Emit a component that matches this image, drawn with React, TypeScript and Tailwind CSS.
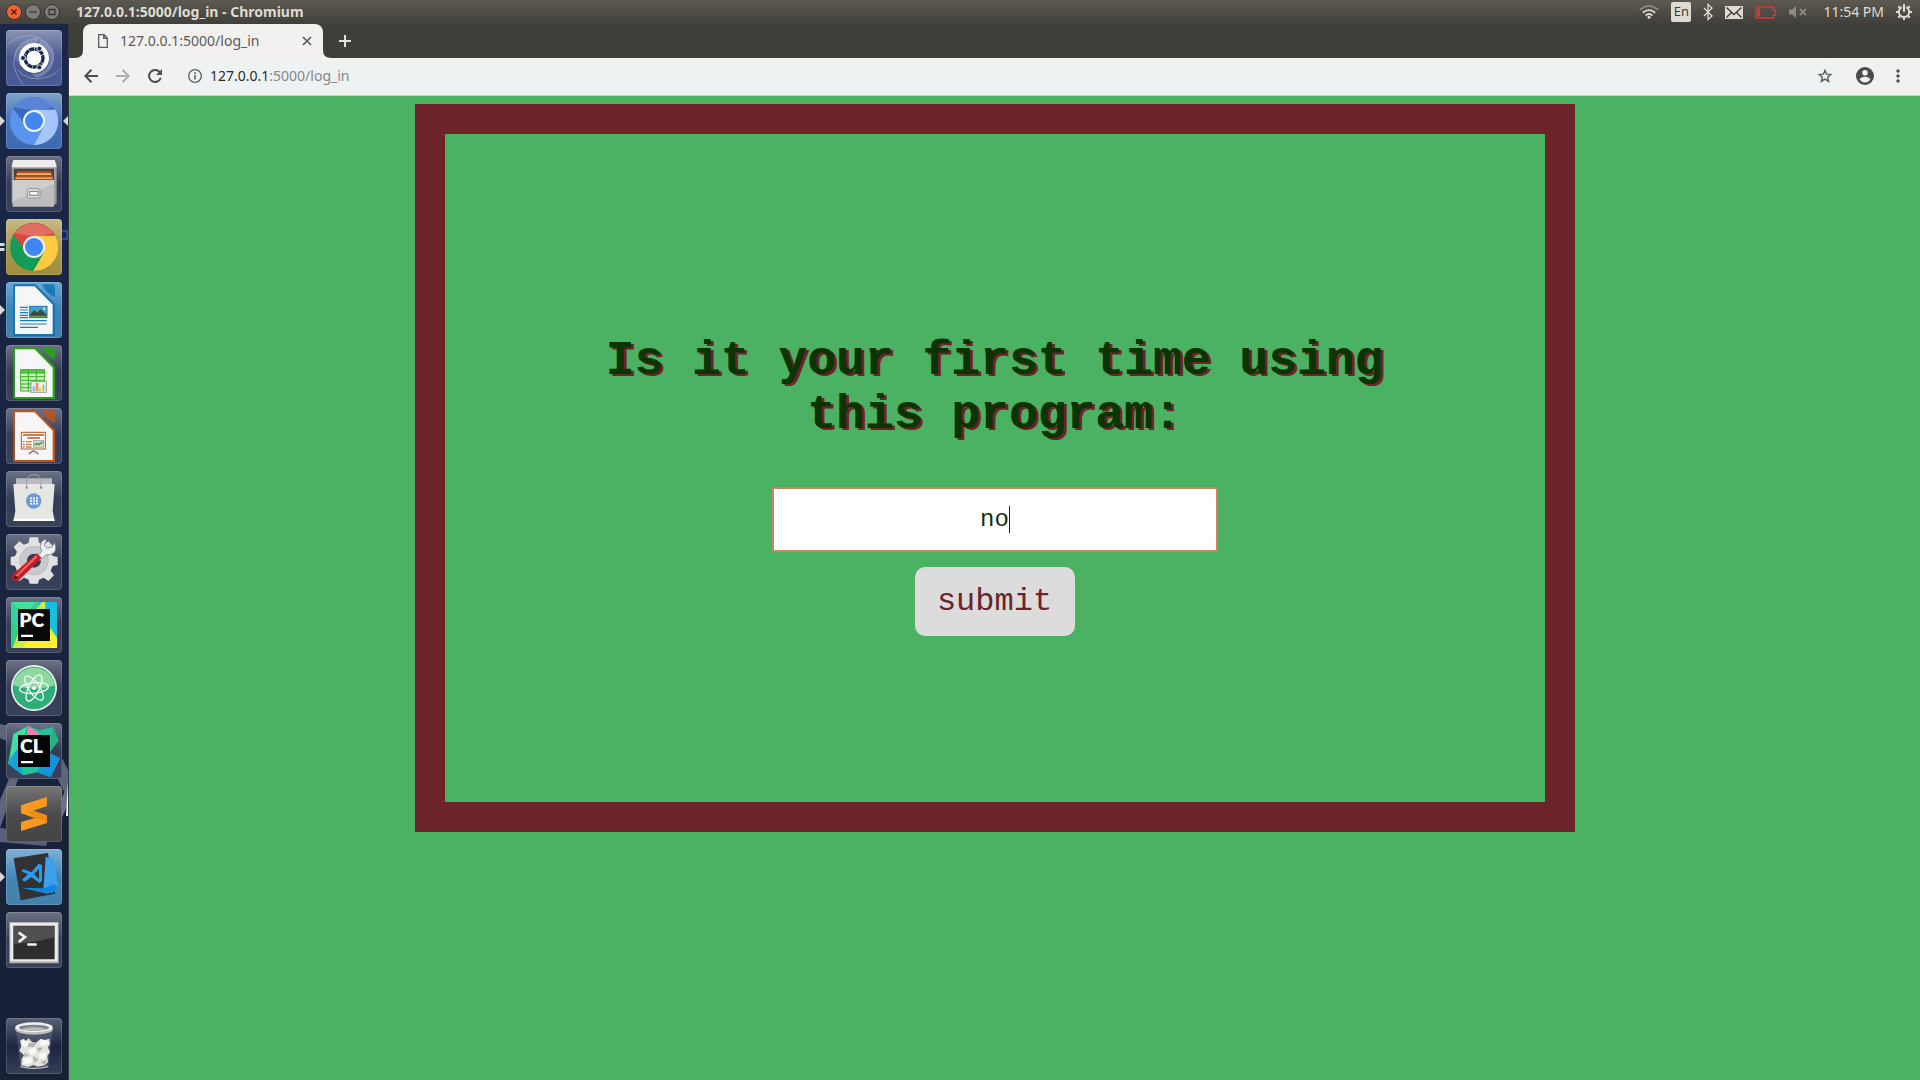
import React from "react";

type Marks = "none" | "one" | "multi" | "active";

interface LauncherItem {
  name: string;
  tile: string;
  marks: Marks;
  art: React.ReactNode;
}

const plain = "bg-linear-to-b from-[#6d7285] via-[#343c56] to-[#3a425b]";

function DocumentShape({ color, children }: { color: string; children: React.ReactNode }) {
  return (
    <>
      <path d="M22 7H88L147 66V162H22Z" fill={color} />
      <path d="M27 13H86L140 68V156H27Z" fill="#f6f6f6" />
      <path d="M108 7H140Q147 7 147 14V46Q136 42 124 30Q112 18 108 7Z" fill={color} opacity="0.85" />
      {children}
    </>
  );
}

function Segments() {
  return (
    <>
      <circle cx="84" cy="84" r="27" fill="none" stroke="#1c2a52" strokeWidth="10" strokeDasharray="14.5 1.5" />
      <circle cx="84" cy="84" r="21" fill="#fff" />
      {[
        [51, 84],
        [100, 56],
        [100, 112],
      ].map(([x, y]) => (
        <circle key={`${x}-${y}`} cx={x} cy={y} r="7.5" fill="#1c2a52" stroke="#fff" strokeWidth="2.5" />
      ))}
    </>
  );
}

const items: LauncherItem[] = [
  {
    name: "Search your computer",
    tile: "bg-linear-to-b from-[#8a94b4] via-[#4b5b91] to-[#485b95]",
    marks: "none",
    art: (
      <>
        <g fill="none" stroke="#aeb9da" strokeOpacity="0.55" strokeWidth="3">
          <path d="M6 42Q50 2 104 26Q148 50 142 90Q134 130 90 142" />
          <path d="M98 24Q34 28 24 84Q20 128 52 164" />
          <path d="M34 120Q70 158 120 142Q146 136 162 116" />
        </g>
        <path d="M104 26Q148 50 142 90Q134 130 90 142Q60 130 84 84Z" fill="#c5cde6" opacity="0.3" />
        <path d="M24 84Q28 34 98 24L84 60L44 110Z" fill="#c5cde6" opacity="0.22" />
        <circle cx="85" cy="86" r="46" fill="#1c2a52" opacity="0.35" />
        <circle cx="84" cy="84" r="45" fill="#fff" />
        <Segments />
      </>
    ),
  },
  {
    name: "Chromium Web Browser",
    tile: "bg-linear-to-b from-[#7fa2cc] via-[#4573b8] to-[#3c69b0]",
    marks: "active",
    art: (
      <>
        <circle cx="84" cy="84" r="72" fill="#5a93f0" />
        <path d="M22 47A72 72 0 0 1 146 50H84L58 95Z" fill="#3b67c4" />
        <path d="M26 42A72 72 0 0 1 142 42Q84 60 26 42Z" fill="#6f97e2" opacity="0.6" />
        <path d="M84 50H148A72 72 0 0 1 84 156L114 100Z" fill="#a6c5fa" />
        <circle cx="84" cy="84" r="33" fill="#f2f6ff" />
        <circle cx="84" cy="84" r="27" fill="#4287f5" />
      </>
    ),
  },
  {
    name: "Files",
    tile: plain,
    marks: "none",
    art: (
      <>
        <path d="M22 12H146L152 26V142L144 148H24L17 142V26Z" fill="#9b9b9b" />
        <path d="M22 12H146L152 34H17Z" fill="#ededed" />
        <path d="M24 38H144V74H24Z" fill="#4d4039" />
        <path d="M34 46H134V50H34ZM30 58H140V62H30Z" fill="#c84f1e" />
        <path d="M32 51H136V57H32ZM28 64H140V70H28Z" fill="#efaa55" />
        <path d="M20 72H144V152H20Z" fill="#bdbdbd" />
        <path d="M20 72H144V84L20 136Z" fill="#cecece" />
        <rect x="64" y="98" width="38" height="28" rx="6" fill="#e5e5e5" stroke="#8d8d8d" strokeWidth="3" />
        <rect x="71" y="106" width="25" height="12" fill="#fafafa" stroke="#777" strokeWidth="3" />
      </>
    ),
  },
  {
    name: "Google Chrome",
    tile: "bg-linear-to-b from-[#c7bc88] via-[#a99850] to-[#a08d3c]",
    marks: "multi",
    art: (
      <>
        <circle cx="84" cy="84" r="72" fill="#149b57" />
        <path d="M22 47A72 72 0 0 1 148 50H84L50 84Z" fill="#d9463b" />
        <path d="M26 42A72 72 0 0 1 142 42Q84 60 26 42Z" fill="#e5897f" opacity="0.6" />
        <path d="M84 50H148A72 72 0 0 1 82 156L114 100Z" fill="#fdcb42" />
        <circle cx="84" cy="84" r="33" fill="#f1f1f1" />
        <circle cx="84" cy="84" r="27" fill="#4285f4" />
      </>
    ),
  },
  {
    name: "LibreOffice Writer",
    tile: "bg-linear-to-b from-[#6aa9d8] via-[#3a82b9] to-[#4482ad]",
    marks: "one",
    art: (
      <DocumentShape color="#1273b4">
        <path d="M42 76H66M42 84H66M42 92H66M42 100H66M42 107H66M42 116H122M42 126H122M42 136H96" stroke="#1b7cbd" strokeWidth="3.5" />
        <rect x="71" y="73" width="52" height="34" fill="#3fa0de" stroke="#2379b3" strokeWidth="3" />
        <path d="M72 98L84 84L94 92L104 82L122 98V106H72Z" fill="#3c4a3b" />
        <path d="M72 101H122V106H72Z" fill="#62a345" />
        <circle cx="115" cy="80" r="4" fill="#f7d34a" />
      </DocumentShape>
    ),
  },
  {
    name: "LibreOffice Calc",
    tile: plain,
    marks: "none",
    art: (
      <DocumentShape color="#27a416">
        <path d="M44 74H116V138H44Z" fill="#c9f2bf" />
        <path d="M44 74H116V84H44Z" fill="#5cc84a" />
        <path d="M44 74H116V138H44ZM44 84H116M44 95H116M44 106H116M44 117H116M44 128H116M67 74V138M91 74V138" fill="none" stroke="#35ac23" strokeWidth="3" />
        <rect x="75" y="110" width="46" height="32" fill="#f2f2f2" stroke="#999" strokeWidth="3" />
        <path d="M80 124H86V139H80Z" fill="#76b6ee" />
        <path d="M89 114H97V139H89Z" fill="#f08e58" />
        <path d="M99 128H105V139H99Z" fill="#e3c75c" />
        <path d="M109 119H115V139H109Z" fill="#83cf72" />
      </DocumentShape>
    ),
  },
  {
    name: "LibreOffice Impress",
    tile: plain,
    marks: "none",
    art: (
      <DocumentShape color="#bd531d">
        <rect x="46" y="73" width="72" height="50" fill="#fff" stroke="#b9561f" strokeWidth="3" />
        <path d="M51 81H114M64 90H102" stroke="#b9561f" strokeWidth="5" />
        <path d="M50 101H56M50 109H56M50 117H56M60 101H77M60 109H77M60 117H77" stroke="#cf7440" strokeWidth="4" />
        <rect x="82" y="97" width="31" height="21" fill="#d2d2d2" stroke="#9a9a9a" strokeWidth="2" />
        <path d="M86 112L93 106L98 110L110 102" fill="none" stroke="#2ea21e" strokeWidth="4" />
        <path d="M82 126V132M82 128L68 138M82 128L98 138" stroke="#777" strokeWidth="4" />
      </DocumentShape>
    ),
  },
  {
    name: "Ubuntu Software",
    tile: plain,
    marks: "none",
    art: (
      <>
        <path d="M30 22H138V42H30Z" fill="#b9bcbf" />
        <path d="M22 39H146L140 120L146 150H22L28 120Z" fill="#e6e7e3" />
        <path d="M24 143H144L146 150H22Z" fill="#fff" />
        <path d="M62 48V30Q64 11 84 11Q104 11 105 30V48" fill="none" stroke="#a2a5a6" strokeWidth="3" />
        <circle cx="62" cy="50" r="3" fill="#777" />
        <circle cx="105" cy="50" r="3" fill="#777" />
        <circle cx="83" cy="90" r="23" fill="#6f9bd0" />
        <path d="M72 82H96M72 90H96M72 98H96" stroke="#fff" strokeWidth="5" strokeDasharray="6 3" />
      </>
    ),
  },
  {
    name: "System Settings",
    tile: plain,
    marks: "none",
    art: (
      <>
        <path
          d="M71 10H96L99 26L113 32L127 22L144 39L134 53L140 66L155 69V93L140 96L134 110L144 124L127 141L113 131L99 137L96 149H71L68 137L54 131L40 141L23 124L33 110L27 96L14 93V69L27 66L33 53L23 39L40 22L54 32L68 26Z"
          fill="#dfe1e2"
        />
        <circle cx="84" cy="80" r="43" fill="#c7cacc" stroke="#aeb2b5" strokeWidth="2" />
        <circle cx="84" cy="80" r="21" fill="#2f3854" />
        <path d="M92 68L108 52Q98 38 106 24L118 15L121 20L115 33L124 43L138 39L145 26Q154 44 144 56Q132 66 120 62L102 80Z" fill="#f0f1f2" stroke="#7c8286" strokeWidth="2.500" />
        <path d="M92 58L107 71L42 136Q32 144 22 138Q14 130 22 120Z" fill="#c61d24" />
        <path d="M90 64L95 68L32 130L26 128Z" fill="#ee6a62" />
        <circle cx="29" cy="130" r="5" fill="#5a0d10" />
      </>
    ),
  },
  {
    name: "PyCharm",
    tile: plain,
    marks: "none",
    art: (
      <>
        <path d="M15 15H153V153H15Z" fill="#33d29a" />
        <path d="M15 15H90L60 50Z" fill="#44e2a0" />
        <path d="M96 15H153V130L120 70Z" fill="#16bfe0" />
        <path d="M34 110L108 15H118V70L153 122V153H22L15 150Z" fill="#c9ee45" />
        <path d="M60 135L132 100L153 122V153H50Z" fill="#fdf02f" />
        <path d="M15 60L36 110L20 153H15Z" fill="#2fcf80" />
        <path d="M36 36H132V132H36Z" fill="#090909" />
        <path d="M45 113H81V120H45Z" fill="#fff" />
        <text x="40" y="91" fill="#fff" fontSize="58" fontWeight="800" className="font-['Lato',sans-serif]">
          PC
        </text>
      </>
    ),
  },
  {
    name: "Atom",
    tile: plain,
    marks: "none",
    art: (
      <>
        <circle cx="84" cy="84" r="69" fill="#eef3f0" />
        <circle cx="84" cy="84" r="64" fill="#2fae79" />
        <path d="M21 76A64 64 0 0 1 147 76Q84 96 21 76Z" fill="#8fd6a0" />
        <g fill="none" stroke="#f2fff8" strokeWidth="4">
          <ellipse cx="84" cy="84" rx="43" ry="16" transform="rotate(-6 84 84)" />
          <ellipse cx="84" cy="84" rx="43" ry="16" transform="rotate(55 84 84)" />
          <ellipse cx="84" cy="84" rx="43" ry="16" transform="rotate(116 84 84)" />
        </g>
        <circle cx="84" cy="84" r="6" fill="#fff" />
      </>
    ),
  },
  {
    name: "CLion",
    tile: plain,
    marks: "none",
    art: (
      <>
        <path d="M22 34L66 8L100 22L140 12L158 52L130 90L162 106L134 162L92 148L54 157L6 122Z" fill="#21c49a" />
        <path d="M66 8L100 32L90 50H62Z" fill="#f27db0" />
        <path d="M6 122L36 70L50 157Z" fill="#17a1dc" />
        <path d="M22 34L62 12L50 60L12 104Z" fill="#45dca2" />
        <path d="M130 90L162 106L134 162L92 148Z" fill="#1593d9" />
        <path d="M140 12L158 52L132 80Z" fill="#2bb07d" />
        <path d="M36 36H132V132H36Z" fill="#050505" />
        <path d="M45 114H81V121H45Z" fill="#fff" />
        <text x="42" y="89" fill="#fff" fontSize="58" fontWeight="800" className="font-['Lato',sans-serif]">
          CL
        </text>
      </>
    ),
  },
  {
    name: "Sublime Text",
    tile: "bg-linear-to-b from-[#777] via-[#4b4b4b] to-[#434343]",
    marks: "none",
    art: (
      <>
        <path d="M45 58L123 33V60L82 74L123 88V111L45 135V108L86 96L45 82Z" fill="#fb9820" />
        <path d="M64 76L82 74L123 88V108L86 96Z" fill="#e27d12" opacity="0.5" />
      </>
    ),
  },
  {
    name: "Visual Studio Code",
    tile: "bg-linear-to-b from-[#80b1d5] via-[#4287b9] to-[#457fa9]",
    marks: "one",
    art: (
      <>
        <path d="M23 28L126 12L147 134L44 154Z" fill="#303235" />
        <path d="M119 24L142 26L157 116L139 131H122L112 124Z" fill="#3ba0ea" />
        <path d="M46 116L114 118L144 106L157 116L139 131L122 134Z" fill="#1684d8" />
        <path d="M98 44L108 48V96L100 102L76 84L56 98L48 92L66 76L46 66L52 60L76 70ZM99 60L84 76L99 90Z" fill="#2d9bea" fillRule="evenodd" />
      </>
    ),
  },
  {
    name: "Terminal",
    tile: plain,
    marks: "none",
    art: (
      <>
        <path d="M10 30H158V154H10Z" fill="#b4b4b4" />
        <path d="M13 33H155V148H13Z" fill="#ececec" />
        <path d="M22 41H146V142H22Z" fill="#2d2d2d" />
        <path d="M24 43H144V76Q84 92 24 96Z" fill="#505050" />
        <path d="M38 62L57 75L38 90" fill="none" stroke="#f4f4f4" strokeWidth="8" />
        <path d="M64 94H92V101H64Z" fill="#f4f4f4" />
      </>
    ),
  },
];

const trash: LauncherItem = {
  name: "Trash",
  tile: "bg-linear-to-b from-[#5b6176] via-[#1c2440] to-[#363e58]",
  marks: "none",
  art: (
    <>
      <path d="M30 36H140L127 146Q84 156 43 146Z" fill="#8d98a8" opacity="0.3" />
      <path d="M43 144Q84 156 127 144V148Q84 158 43 148Z" fill="#c6c9c6" />
      <path
        d="M42 68L52 62L60 68L68 61L78 72L90 74L104 62L116 66L130 62L132 78L126 88L132 102L124 114L126 132L116 142L96 146L82 141L66 147L46 142L47 122L54 112L40 98L46 84Z"
        fill="#e4e3df"
      />
      <g fill="#f8f8f6">
        <path d="M50 66L70 74L62 88L46 82Z" />
        <path d="M104 66L126 68L120 84L102 80Z" />
        <path d="M66 94L88 88L92 106L74 112Z" />
        <path d="M98 108L122 102L118 122L100 124Z" />
        <path d="M52 122L76 118L78 136L54 138Z" />
      </g>
      <g fill="#b4b4ae">
        <path d="M70 74L90 76L84 86L64 88Z" />
        <path d="M92 90L112 88L100 102Z" />
        <path d="M54 104L70 112L56 118Z" />
        <path d="M80 114L98 124L86 134Z" />
        <path d="M104 132L122 126L116 140Z" />
      </g>
      <ellipse cx="84" cy="33" rx="57" ry="17" fill="#bdbdb9" />
      <ellipse cx="84" cy="28" rx="56" ry="15" fill="#f0f0ee" />
      <ellipse cx="84" cy="29" rx="45" ry="9" fill="#7f8588" />
      <path d="M46 33Q84 22 122 33Q84 43 46 33Z" fill="#b9bdbf" />
    </>
  ),
};

function LauncherButton({ item }: { item: LauncherItem }) {
  return (
    <li className="relative flex">
      {(item.marks === "one" || item.marks === "active") && (
        <svg viewBox="0 0 5 10" className="absolute top-[23px] -left-1.5 h-2.5 w-[5px] fill-[#d8d8d8]" aria-hidden="true">
          <path d="M0 0L5 5L0 10Z" />
        </svg>
      )}
      {item.marks === "multi" && (
        <svg viewBox="0 0 5 10" className="absolute top-[23px] -left-1.5 h-2.5 w-[5px] fill-[#d8d8d8]" aria-hidden="true">
          <path d="M0 1H4L5 2.5L4 4H0ZM0 6H4L5 7.5L4 9H0Z" />
        </svg>
      )}
      <button
        type="button"
        aria-label={item.name}
        className={`size-14 overflow-hidden rounded-sm shadow-[inset_0_0_0_1px_rgba(255,255,255,0.15)] ${item.tile}`}
      >
        <svg viewBox="0 0 168 168" className="size-14" aria-hidden="true">
          {item.art}
        </svg>
      </button>
      {item.marks === "active" && (
        <svg viewBox="0 0 5 10" className="absolute top-[23px] -right-1.5 h-2.5 w-[5px] fill-[#d8d8d8]" aria-hidden="true">
          <path d="M5 0L0 5L5 10Z" />
        </svg>
      )}
    </li>
  );
}

function Launcher() {
  return (
    <nav aria-label="Launcher" className="relative flex w-[69px] shrink-0 flex-col border-r border-[#35364a] bg-linear-to-b from-[#1a2748] to-[#172035] px-1.5 pt-1.5 pb-1.5">
      <svg viewBox="0 0 68 150" className="absolute top-[676px] left-0 h-[150px] w-[68px]" aria-hidden="true">
        <g fill="#6b718a">
          <path d="M0 0V24L27 30L45 24L68 70V100L36 34L10 100L0 128V100L22 48L0 38Z" opacity="0.85" />
          <path d="M0 128L50 134L46 146L0 142Z" opacity="0.8" />
          <path d="M68 84V104L52 140L46 134Z" />
        </g>
        <path d="M68 82V116H66Z" fill="#fff" />
      </svg>
      <svg viewBox="0 0 6 24" className="absolute top-[206px] right-0 h-6 w-1.5" aria-hidden="true">
        <path d="M0 1H5V9H0" fill="none" stroke="#304a94" strokeWidth="2" />
      </svg>
      <ul className="relative flex grow flex-col gap-[7px]">
        {items.map((item) => (
          <LauncherButton key={item.name} item={item} />
        ))}
        <li className="grow" aria-hidden="true" />
        <LauncherButton item={trash} />
      </ul>
    </nav>
  );
}

function MenuBar() {
  return (
    <header className="flex h-6 shrink-0 items-center bg-linear-to-b from-[#5c5a50] to-[#403f3a] pr-2 pl-1.5 font-['Noto_Sans',sans-serif] text-[#dfdbd2]">
      <div className="flex items-center gap-[3px]">
        <button type="button" aria-label="Close window" className="size-4">
          <svg viewBox="0 0 16 16" className="size-4">
            <circle cx="8" cy="8" r="7.5" fill="#ee6234" stroke="#3a3834" />
            <path d="M5.5 5.5L10.5 10.5M10.5 5.5L5.5 10.5" stroke="#532214" strokeWidth="1.5" />
          </svg>
        </button>
        <button type="button" aria-label="Minimize window" className="size-4">
          <svg viewBox="0 0 16 16" className="size-4">
            <circle cx="8" cy="8" r="7.5" fill="#7e7c74" stroke="#36342f" />
            <path d="M4.5 8H11.5" stroke="#3a3834" strokeWidth="1.3" />
          </svg>
        </button>
        <button type="button" aria-label="Restore window" className="size-4">
          <svg viewBox="0 0 16 16" className="size-4">
            <circle cx="8" cy="8" r="7.5" fill="#7e7c74" stroke="#36342f" />
            <path d="M5 5.5H11V10.5H5Z" fill="none" stroke="#3a3834" strokeWidth="1.3" />
          </svg>
        </button>
      </div>
      <h1 className="ml-4 text-sm leading-6 font-bold">127.0.0.1:5000/log_in - Chromium</h1>
      <div className="ml-auto flex items-center">
        <svg viewBox="0 0 20 14" className="h-3.5 w-5" fill="none" strokeWidth="1.8" aria-label="Wi-Fi">
          <path d="M.8 4.8Q10-3 19.2 4.8" stroke="#8b8981" />
          <path d="M3.8 7.8Q10 2.5 16.2 7.8M6.6 10.5Q10 7.5 13.4 10.5" stroke="#dfdbd2" />
          <circle cx="10" cy="12.2" r="1.5" fill="#dfdbd2" />
        </svg>
        <span className="ml-3 flex h-5 w-5 items-center justify-center rounded-xs bg-[#dfdbd2] text-[13px] text-[#3c3b37]">En</span>
        <svg viewBox="0 0 10 18" className="ml-3 h-[18px] w-2.5" fill="none" stroke="#dfdbd2" strokeWidth="1.3" aria-label="Bluetooth">
          <path d="M1 5L9 13L5 16.5V1.5L9 5L1 13" />
        </svg>
        <svg viewBox="0 0 18 13" className="ml-3 h-[13px] w-[18px]" aria-label="Messages">
          <path d="M0 0H18V13H0Z" fill="#dfdbd2" />
          <path d="M1.5 1.5L9 8.5L16.5 1.5M1.5 11.5L6.5 6.5M16.5 11.5L11.5 6.5" fill="none" stroke="#3c3b37" strokeWidth="1.3" />
        </svg>
        <svg viewBox="0 0 22 13" className="ml-3 h-[13px] w-[22px]" aria-label="Battery low">
          <path d="M1.5 1H18.5V4H20.5V9H18.5V12H1.5Q.7 12 .7 11V2Q.7 1 1.5 1Z" fill="none" stroke="#e0342b" strokeWidth="1.3" />
          <path d="M2 2.5H5V10.5H2Z" fill="#e0342b" />
        </svg>
        <svg viewBox="0 0 18 12" className="ml-3 h-3 w-[18px]" aria-label="Muted">
          <path d="M0 3.5H3L7 0V12L3 8.5H0Z" fill="#8b8981" />
          <path d="M11 3L17 9M17 3L11 9" stroke="#8b8981" strokeWidth="1.8" />
        </svg>
        <time className="ml-4 text-sm leading-6 whitespace-nowrap">11:54 PM</time>
        <svg viewBox="0 0 16 16" className="ml-3 size-4" fill="none" stroke="#dfdbd2" aria-label="System">
          <path d="M5.8 3.2A5.2 5.2 0 1 0 10.2 3.2" strokeWidth="2" />
          <path d="M8 0V8" strokeWidth="2" />
          <path d="M2.3 2.3L4 4M13.7 2.3L12 4M0 8H2.5M16 8H13.5M2.3 13.7L4 12M13.7 13.7L12 12M8 16V13.5" strokeWidth="2.2" />
        </svg>
      </div>
    </header>
  );
}

function TabStrip() {
  return (
    <div className="flex h-[34px] shrink-0 items-end bg-[#3f3f39] pl-1.5 font-['Noto_Sans',sans-serif]">
      <svg viewBox="0 0 8 8" className="size-2 fill-[#f2f1f0]" aria-hidden="true">
        <path d="M8 0V8H0Q8 8 8 0Z" />
      </svg>
      <div className="flex h-[34px] w-60 items-center rounded-t-lg bg-[#f2f1f0] pr-[11px] pl-[15px]">
        <svg viewBox="0 0 10 14" className="h-3.5 w-2.5" fill="none" stroke="#5a5a57" strokeWidth="1.3" aria-hidden="true">
          <path d="M.7.7H6L9.3 4V13.3H.7ZM5.7.7V4.3H9.3" />
        </svg>
        <span className="ml-3 text-sm leading-5 text-[#5a5a57]">127.0.0.1:5000/log_in</span>
        <button type="button" aria-label="Close tab" className="ml-auto">
          <svg viewBox="0 0 10 10" className="size-2.5" stroke="#5a5a57" strokeWidth="1.7">
            <path d="M1 1L9 9M9 1L1 9" />
          </svg>
        </button>
      </div>
      <svg viewBox="0 0 8 8" className="size-2 fill-[#f2f1f0]" aria-hidden="true">
        <path d="M0 0V8H8Q0 8 0 0Z" />
      </svg>
      <button type="button" aria-label="New tab" className="ml-2 flex h-[34px] items-center">
        <svg viewBox="0 0 12 12" className="size-3" stroke="#e4e2de" strokeWidth="2">
          <path d="M6 0V12M0 6H12" />
        </svg>
      </button>
    </div>
  );
}

function Toolbar() {
  return (
    <div className="flex h-[38px] shrink-0 items-center border-b border-[#cfcecb] bg-[#f2f1f0] pr-5 pb-px pl-[15px] font-['Noto_Sans',sans-serif]">
      <div className="flex items-center gap-[18px]">
        <button type="button" aria-label="Back">
          <svg viewBox="0 0 14 14" className="size-3.5" fill="none" stroke="#4f4f4d" strokeWidth="2">
            <path d="M14 7H1.5M7.5.8L1.3 7L7.5 13.2" />
          </svg>
        </button>
        <button type="button" aria-label="Forward" disabled>
          <svg viewBox="0 0 14 14" className="size-3.5" fill="none" stroke="#adadab" strokeWidth="2">
            <path d="M0 7H12.5M6.5.8L12.7 7L6.5 13.2" />
          </svg>
        </button>
        <button type="button" aria-label="Reload">
          <svg viewBox="0 0 14 14" className="size-3.5">
            <path d="M11.8 3.2A6 6 0 1 0 12.8 8.8" fill="none" stroke="#4f4f4d" strokeWidth="2" />
            <path d="M14 0V6H8Z" fill="#4f4f4d" />
          </svg>
        </button>
      </div>
      <div className="ml-4 flex h-[30px] grow items-center rounded-full bg-[#eff2f3] px-2.5">
        <svg viewBox="0 0 14 14" className="size-3.5 shrink-0" fill="none" stroke="#5c5e5f" strokeWidth="1.3" aria-hidden="true">
          <circle cx="7" cy="7" r="6.3" />
          <path d="M7 6V10.5M7 3.3V4.9" strokeWidth="1.6" />
        </svg>
        <a href="#address" className="ml-2 text-sm leading-5 text-[#2b2b2d]">
          127.0.0.1<span className="text-[#85888c]">:5000/log_in</span>
        </a>
        <button type="button" aria-label="Bookmark this page" className="ml-auto">
          <svg viewBox="0 0 14 14" className="size-3.5" fill="none" stroke="#5c5e62" strokeWidth="1.4">
            <path d="M7 1.3L8.6 5.2L12.9 5.5L9.6 8.2L10.7 12.4L7 10.1L3.3 12.4L4.4 8.2L1.1 5.5L5.4 5.2Z" />
          </svg>
        </button>
      </div>
      <button type="button" aria-label="Profile" className="ml-3.5">
        <svg viewBox="0 0 18 18" className="size-[18px]">
          <circle cx="9" cy="9" r="9" fill="#4b4b4e" />
          <circle cx="9" cy="5.7" r="2.8" fill="#f2f1f0" />
          <path d="M3.6 12.5Q5 9.8 9 9.8Q13 9.8 14.4 12.5Q12.3 15.5 9 15.5Q5.7 15.5 3.6 12.5Z" fill="#f2f1f0" />
        </svg>
      </button>
      <button type="button" aria-label="Menu" className="ml-[22px]">
        <svg viewBox="0 0 4 14" className="h-3.5 w-1 fill-[#4b4b4e]">
          <circle cx="2" cy="2" r="1.7" />
          <circle cx="2" cy="7" r="1.7" />
          <circle cx="2" cy="12" r="1.7" />
        </svg>
      </button>
    </div>
  );
}

function LoginPage() {
  return (
    <main className="grow bg-[#4bb163] p-2 font-['Liberation_Mono',monospace]">
      <form
        className="mx-auto flex max-w-[1160px] flex-col items-center border-[30px] border-[#6c2329] px-40 pt-[200px] pb-[166px]"
        onSubmit={(event) => event.preventDefault()}
      >
        <label
          htmlFor="answer"
          className="text-center text-5xl leading-[54px] font-bold text-[#0a3502] [text-shadow:3px_2px_#6c2329]"
        >
          Is it your first time using this program:
        </label>
        <div className="relative mt-[45px] w-[446px]">
          <input
            id="answer"
            type="text"
            defaultValue="no"
            className="h-[65px] w-full rounded-xs border-2 border-[#cf835f] bg-white text-center text-2xl text-[#0a3502] outline-none"
          />
          <span className="pointer-events-none absolute inset-0 flex items-center justify-center pl-[29px]" aria-hidden="true">
            <span className="h-[27px] w-px bg-[#0a3502]" />
          </span>
        </div>
        <button type="submit" className="mt-[15px] h-[69px] w-40 rounded-[10px] bg-[#dcdcdc] text-[32px] text-[#6c2329]">
          submit
        </button>
      </form>
    </main>
  );
}

export default function App() {
  return (
    <div className="flex min-h-screen flex-col">
      <MenuBar />
      <div className="flex grow">
        <Launcher />
        <div className="flex min-w-0 grow flex-col">
          <TabStrip />
          <Toolbar />
          <LoginPage />
        </div>
      </div>
    </div>
  );
}
